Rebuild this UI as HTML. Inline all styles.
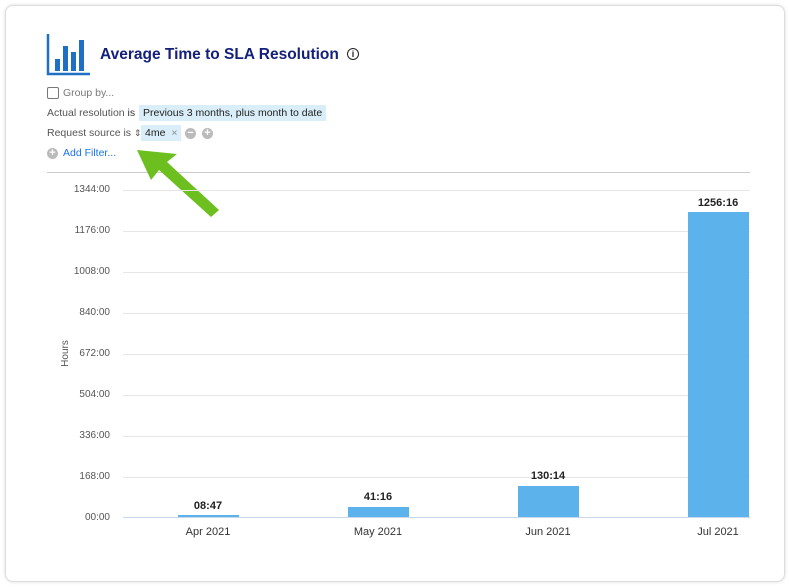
<!DOCTYPE html>
<html><head><style>
body{margin:0;background:#fff;font-family:"Liberation Sans",Arial,sans-serif;}
.card{position:absolute;left:5px;top:5px;width:778px;height:575px;border:1px solid #ddd;border-radius:8px;box-shadow:0 0 3px rgba(0,0,0,.15);background:#fff;}
.t{position:absolute;font-size:10.5px;color:#555;white-space:nowrap}
.chip{position:absolute;background:#d9eef8;color:#222;padding:2px 4px;font-size:10.5px;white-space:nowrap}
.yl{position:absolute;left:60px;width:50px;text-align:right;font-size:10px;color:#555}
.gl{position:absolute;left:123px;width:627px;height:1px;background:#e6e6e6}
.bar{position:absolute;width:61px;background:#5cb3ec}
.bl{position:absolute;width:100px;text-align:center;font-size:11px;font-weight:bold;color:#222}
.xl{position:absolute;width:100px;text-align:center;font-size:11px;color:#333;top:526px}
.cir{position:absolute;width:11px;height:11px;border-radius:50%;background:#bbb;color:#fff;font-size:11px;line-height:10px;text-align:center;font-weight:bold}
</style></head><body>
<div class="card"></div>
<svg style="position:absolute;left:46px;top:34px" width="45" height="42">
<path d="M2 0V40H44" stroke="#1f6fc5" stroke-width="2.5" fill="none"/>
<rect x="9" y="25" width="5" height="12" fill="#1f6fc5"/>
<rect x="17" y="12" width="5" height="25" fill="#1f6fc5"/>
<rect x="25" y="18" width="5" height="19" fill="#1f6fc5"/>
<rect x="33" y="6" width="5" height="31" fill="#1f6fc5"/>
</svg>
<div class="t" style="left:100px;top:46px;font-size:15.5px;font-weight:bold;color:#14207a">Average Time to SLA Resolution</div>
<div style="position:absolute;left:347px;top:48px;width:10px;height:10px;border:1.5px solid #222;border-radius:50%;font-size:9px;font-weight:bold;text-align:center;line-height:10px;color:#222">i</div>
<div style="position:absolute;left:47px;top:87px;width:10px;height:10px;border:1px solid #777;border-radius:2px"></div>
<div class="t" style="left:63px;top:87px;color:#777">Group by...</div>
<div class="t" style="left:47px;top:107px">Actual resolution <span style="color:#333">is</span></div>
<div class="chip" style="left:139px;top:105px">Previous 3 months, plus month to date</div>
<div class="t" style="left:47px;top:127px">Request source is <span style="font-size:9px">⇕</span></div>
<div class="chip" style="left:141px;top:125px">4me <span style="color:#888;padding-left:3px">×</span></div>
<div class="cir" style="left:185px;top:128px">−</div>
<div class="cir" style="left:202px;top:128px">+</div>
<div class="cir" style="left:47px;top:148px">+</div>
<div class="t" style="left:63px;top:147px;color:#1a73e8">Add Filter...</div>
<div style="position:absolute;left:47px;top:172px;width:703px;height:1px;background:#ccc"></div>
<svg style="position:absolute;left:135px;top:140px" width="90" height="80"><polygon points="2,10 42,14 32,22 84,70 76,77 24,30 16,40" fill="#6cbf1f"/></svg>
<div class="yl" style="top:184px">1344:00</div>
<div class="yl" style="top:225px">1176:00</div>
<div class="yl" style="top:266px">1008:00</div>
<div class="yl" style="top:307px">840:00</div>
<div class="yl" style="top:348px">672:00</div>
<div class="yl" style="top:389px">504:00</div>
<div class="yl" style="top:430px">336:00</div>
<div class="yl" style="top:471px">168:00</div>
<div class="yl" style="top:512px">00:00</div>
<div class="gl" style="top:190px"></div><div class="gl" style="top:231px"></div><div class="gl" style="top:272px"></div><div class="gl" style="top:313px"></div><div class="gl" style="top:354px"></div><div class="gl" style="top:395px"></div><div class="gl" style="top:436px"></div><div class="gl" style="top:477px"></div>
<div class="gl" style="top:517px;background:#c8d8ea"></div>
<div class="t" style="left:52px;top:348px;transform:rotate(-90deg);font-size:10px">Hours</div>
<div class="bar" style="left:178px;top:515px;height:2px"></div>
<div class="bar" style="left:348px;top:507px;height:10px"></div>
<div class="bar" style="left:518px;top:486px;height:31px"></div>
<div class="bar" style="left:688px;top:212px;height:305px"></div>
<div class="bl" style="left:158px;top:500px">08:47</div>
<div class="bl" style="left:328px;top:491px">41:16</div>
<div class="bl" style="left:498px;top:470px">130:14</div>
<div class="bl" style="left:668px;top:197px">1256:16</div>
<div class="xl" style="left:158px">Apr 2021</div>
<div class="xl" style="left:328px">May 2021</div>
<div class="xl" style="left:498px">Jun 2021</div>
<div class="xl" style="left:668px">Jul 2021</div>
</body></html>
